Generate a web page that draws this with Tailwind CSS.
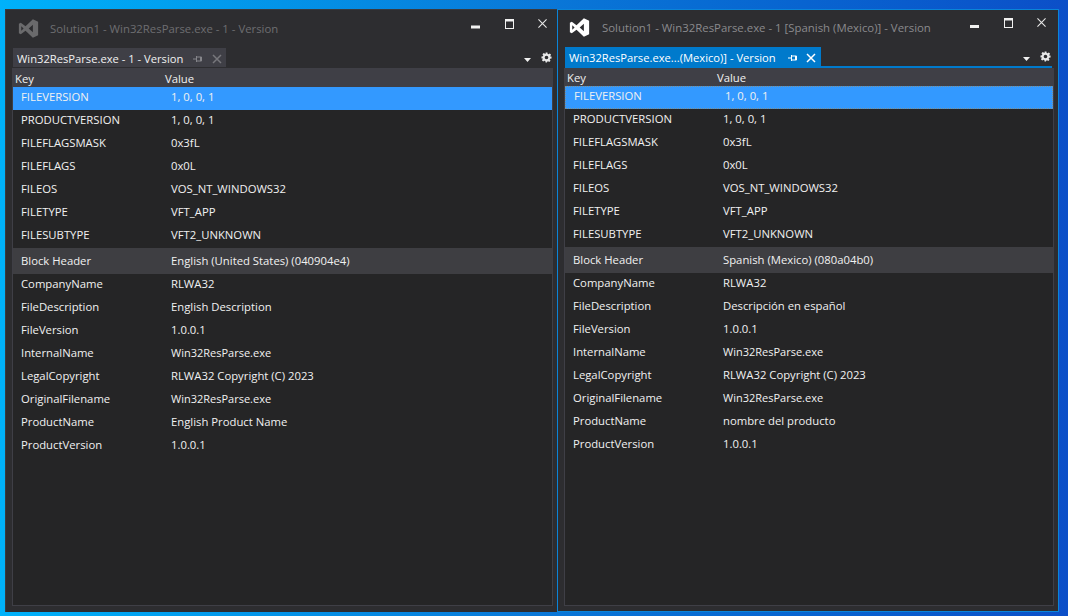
<!doctype html>
<html lang="en"><head><meta charset="utf-8"><script src="https://cdn.jsdelivr.net/npm/@tailwindcss/browser@4"></script></head>
<body class="m-0 overflow-hidden">
<div class="w-[1068px] h-[616px] overflow-hidden flex items-start pl-[5px] pt-[9px] bg-linear-to-r from-[#00b2fa] via-[#0a78d8] to-[#0c4fc8] font-['Open_Sans',sans-serif] text-[11.3px] text-[#f1f1f1]">

<!-- left window -->
<section class="w-[553px] h-[603px] shrink-0 bg-[#2d2d30] border-t border-l border-[#3a3a3e] flex flex-col">
  <header class="h-[38px] shrink-0 flex items-start">
    <svg class="ml-[12px] mt-[8px] w-[21px] h-[21px] text-[#6a6a6c]" viewBox="0 0 24 24" fill="currentColor" fill-rule="evenodd"><path d="M17 1.5 23 4.3V19.7L17 22.5 8.6 14.6 3.2 18.6 1 17.5V6.5L3.2 5.4 8.6 9.4ZM17 7.6 12.2 12 17 16.4ZM3.7 9.3V14.7L6.4 12Z"/></svg>
    <span class="ml-[11px] mt-[10px] text-[11.35px] leading-[18px] text-[#6d6d70] whitespace-nowrap">Solution1 - Win32ResParse.exe - 1 - Version</span>
    <svg class="ml-auto mt-[15px] w-[9px] h-[4px]" viewBox="0 0 9 4"><rect width="9" height="3" y="0.5" fill="#f1f1f1"/></svg>
    <svg class="ml-[25px] mt-[9px] w-[9px] h-[10px]" viewBox="0 0 9 10" fill="none" stroke="#f1f1f1"><rect x="0.5" y="0.5" width="8" height="9"/><path d="M0 1.5H9" stroke-width="2"/></svg>
    <svg class="ml-[24px] mr-[11px] mt-[9px] w-[9px] h-[9px]" viewBox="0 0 10 10" fill="none" stroke="#e8e8e8" stroke-width="1.2"><path d="M0.5 0.5 9.5 9.5M9.5 0.5 0.5 9.5"/></svg>
  </header>
  <div class="h-[20px] shrink-0 ml-[7px] flex items-start">
    <div class="h-[19px] w-[213px] bg-[#3f3f46] flex items-center pl-[4px] pt-[3px] text-[11.2px] whitespace-nowrap">
      <span>Win32ResParse.exe - 1 - Version</span>
      <svg class="absolute left-[193px] top-[54px] w-[9px] h-[10px]" viewBox="0 0 9 10" fill="none" stroke="#85858a"><path d="M0 5H3M3.5 2V8M3.5 3H8.5V7H3.5M7.5 3V7"/></svg>
      <svg class="absolute left-[212px] top-[54px] w-[10px] h-[10px]" viewBox="0 0 10 10" fill="none" stroke="#77777c" stroke-width="1.5"><path d="M1 1 9 9M9 1 1 9"/></svg>
    </div>
    <svg class="ml-auto mt-[10px] w-[7px] h-[4px]" viewBox="0 0 7 4"><path d="M0 0H7L3.5 4Z" fill="#f1f1f1"/></svg>
    <svg class="ml-[10px] mr-[6px] mt-[4px] w-[11px] h-[11px]" viewBox="0 0 24 24" fill="#e8e8e8"><path fill-rule="evenodd" d="M10 1h4l.6 3.2 1.9.8 2.7-1.8 2.8 2.8-1.8 2.7.8 1.9L23 10v4l-3.2.6-.8 1.9 1.8 2.7-2.8 2.8-2.7-1.8-1.9.8L13 23h-3l-.6-3.2-1.9-.8-2.7 1.8-2.8-2.8 1.8-2.7-.8-1.9L1 14v-4l3.2-.6.8-1.9-1.8-2.7 2.8-2.8 2.7 1.8 1.9-.8ZM12 8a4 4 0 1 0 0 8 4 4 0 0 0 0-8Z"/></svg>
  </div>
  <div class="ml-[6px] w-[541px] h-[538px] bg-[#252526] border border-[#3f3f46] flex flex-col leading-[20px]">
    <div class="h-[18px] shrink-0 bg-[#3f3f46] flex items-center pl-[2px] pt-[2px]"><span class="w-[150px]">Key</span><span>Value</span></div>
    <div class="h-[23px] bg-[#3399ff] flex pl-[8px]"><span class="w-[150px]">FILEVERSION</span><span>1, 0, 0, 1</span></div>
    <div class="h-[23px] flex pl-[8px]"><span class="w-[150px]">PRODUCTVERSION</span><span>1, 0, 0, 1</span></div>
    <div class="h-[23px] flex pl-[8px]"><span class="w-[150px]">FILEFLAGSMASK</span><span>0x3fL</span></div>
    <div class="h-[23px] flex pl-[8px]"><span class="w-[150px]">FILEFLAGS</span><span>0x0L</span></div>
    <div class="h-[23px] flex pl-[8px]"><span class="w-[150px]">FILEOS</span><span>VOS_NT_WINDOWS32</span></div>
    <div class="h-[23px] flex pl-[8px]"><span class="w-[150px]">FILETYPE</span><span>VFT_APP</span></div>
    <div class="h-[23px] flex pl-[8px]"><span class="w-[150px]">FILESUBTYPE</span><span>VFT2_UNKNOWN</span></div>
    <div class="h-[26px] bg-[#3e3e42] flex items-center pl-[8px]"><span class="w-[150px]">Block Header</span><span>English (United States) (040904e4)</span></div>
    <div class="h-[23px] flex pl-[8px]"><span class="w-[150px]">CompanyName</span><span>RLWA32</span></div>
    <div class="h-[23px] flex pl-[8px]"><span class="w-[150px]">FileDescription</span><span>English Description</span></div>
    <div class="h-[23px] flex pl-[8px]"><span class="w-[150px]">FileVersion</span><span>1.0.0.1</span></div>
    <div class="h-[23px] flex pl-[8px]"><span class="w-[150px]">InternalName</span><span class="text-[11px]">Win32ResParse.exe</span></div>
    <div class="h-[23px] flex pl-[8px]"><span class="w-[150px]">LegalCopyright</span><span>RLWA32 Copyright (C) 2023</span></div>
    <div class="h-[23px] flex pl-[8px]"><span class="w-[150px]">OriginalFilename</span><span class="text-[11px]">Win32ResParse.exe</span></div>
    <div class="h-[23px] flex pl-[8px]"><span class="w-[150px]">ProductName</span><span>English Product Name</span></div>
    <div class="h-[23px] flex pl-[8px]"><span class="w-[150px]">ProductVersion</span><span>1.0.0.1</span></div>
  </div>
</section>

<!-- right window -->
<section class="relative -ml-px w-[502px] h-[603px] shrink-0 bg-[#2d2d30] border border-[#0a84d8] flex flex-col">
  <header class="h-[37px] shrink-0 flex items-start">
    <svg class="ml-[11px] mt-[7px] w-[21px] h-[21px] text-white" viewBox="0 0 24 24" fill="currentColor" fill-rule="evenodd"><path d="M17 1.5 23 4.3V19.7L17 22.5 8.6 14.6 3.2 18.6 1 17.5V6.5L3.2 5.4 8.6 9.4ZM17 7.6 12.2 12 17 16.4ZM3.7 9.3V14.7L6.4 12Z"/></svg>
    <span class="ml-[12px] mt-[9px] text-[11.4px] leading-[18px] text-[#8a8a8d] whitespace-nowrap">Solution1 - Win32ResParse.exe - 1 [Spanish (Mexico)] - Version</span>
    <svg class="ml-auto mt-[15px] w-[9px] h-[4px]" viewBox="0 0 9 4"><rect width="9" height="3" fill="#f1f1f1"/></svg>
    <svg class="ml-[25px] mt-[8px] w-[9px] h-[10px]" viewBox="0 0 9 10" fill="none" stroke="#f1f1f1"><rect x="0.5" y="0.5" width="8" height="9"/><path d="M0 1.5H9" stroke-width="2"/></svg>
    <svg class="ml-[24px] mr-[12px] mt-[8px] w-[9px] h-[9px]" viewBox="0 0 10 10" fill="none" stroke="#e8e8e8" stroke-width="1.2"><path d="M0.5 0.5 9.5 9.5M9.5 0.5 0.5 9.5"/></svg>
  </header>
  <div class="h-[21px] shrink-0 ml-[7px] mr-[6px] border-b-2 border-[#007acc] flex items-start">
    <div class="h-[19px] w-[256px] bg-[#007acc] flex items-center pl-[4px] pt-[3px] text-[11.2px] text-white whitespace-nowrap">
      <span>Win32ResParse.exe...(Mexico)] - Version</span>
      <svg class="absolute left-[230px] top-[43px] w-[9px] h-[10px]" viewBox="0 0 9 10" fill="none" stroke="#fff"><path d="M0 5H3M3.5 2V8M3.5 3H8.5V7H3.5M7.5 3V7"/></svg>
      <svg class="absolute left-[248px] top-[43px] w-[10px] h-[10px]" viewBox="0 0 10 10" fill="none" stroke="#fff" stroke-width="1.5"><path d="M1 1 9 9M9 1 1 9"/></svg>
    </div>
    <svg class="ml-auto mt-[10px] w-[7px] h-[4px]" viewBox="0 0 7 4"><path d="M0 0H7L3.5 4Z" fill="#f1f1f1"/></svg>
    <svg class="ml-[10px] mr-[1px] mt-[4px] w-[11px] h-[11px]" viewBox="0 0 24 24" fill="#e8e8e8"><path fill-rule="evenodd" d="M10 1h4l.6 3.2 1.9.8 2.7-1.8 2.8 2.8-1.8 2.7.8 1.9L23 10v4l-3.2.6-.8 1.9 1.8 2.7-2.8 2.8-2.7-1.8-1.9.8L13 23h-3l-.6-3.2-1.9-.8-2.7 1.8-2.8-2.8 1.8-2.7-.8-1.9L1 14v-4l3.2-.6.8-1.9-1.8-2.7 2.8-2.8 2.7 1.8 1.9-.8ZM12 8a4 4 0 1 0 0 8 4 4 0 0 0 0-8Z"/></svg>
  </div>
  <div class="ml-[6px] mr-[4px] h-[538px] bg-[#252526] border-x border-b border-[#3f3f46] flex flex-col leading-[20px]">
    <div class="h-[18px] shrink-0 bg-[#3f3f46] flex items-center pl-[2px] pt-[2px]"><span class="w-[150px]">Key</span><span>Value</span></div>
    <div class="h-[23px] bg-[#3399ff] border border-dotted border-[#7f8f90] leading-[18px] flex pl-[8px]"><span class="w-[151px]">FILEVERSION</span><span>1, 0, 0, 1</span></div>
    <div class="h-[23px] flex pl-[8px]"><span class="w-[150px]">PRODUCTVERSION</span><span>1, 0, 0, 1</span></div>
    <div class="h-[23px] flex pl-[8px]"><span class="w-[150px]">FILEFLAGSMASK</span><span>0x3fL</span></div>
    <div class="h-[23px] flex pl-[8px]"><span class="w-[150px]">FILEFLAGS</span><span>0x0L</span></div>
    <div class="h-[23px] flex pl-[8px]"><span class="w-[150px]">FILEOS</span><span>VOS_NT_WINDOWS32</span></div>
    <div class="h-[23px] flex pl-[8px]"><span class="w-[150px]">FILETYPE</span><span>VFT_APP</span></div>
    <div class="h-[23px] flex pl-[8px]"><span class="w-[150px]">FILESUBTYPE</span><span>VFT2_UNKNOWN</span></div>
    <div class="h-[26px] bg-[#3e3e42] flex items-center pl-[8px]"><span class="w-[150px]">Block Header</span><span>Spanish (Mexico) (080a04b0)</span></div>
    <div class="h-[23px] flex pl-[8px]"><span class="w-[150px]">CompanyName</span><span>RLWA32</span></div>
    <div class="h-[23px] flex pl-[8px]"><span class="w-[150px]">FileDescription</span><span>Descripción en español</span></div>
    <div class="h-[23px] flex pl-[8px]"><span class="w-[150px]">FileVersion</span><span>1.0.0.1</span></div>
    <div class="h-[23px] flex pl-[8px]"><span class="w-[150px]">InternalName</span><span class="text-[11px]">Win32ResParse.exe</span></div>
    <div class="h-[23px] flex pl-[8px]"><span class="w-[150px]">LegalCopyright</span><span>RLWA32 Copyright (C) 2023</span></div>
    <div class="h-[23px] flex pl-[8px]"><span class="w-[150px]">OriginalFilename</span><span class="text-[11px]">Win32ResParse.exe</span></div>
    <div class="h-[23px] flex pl-[8px]"><span class="w-[150px]">ProductName</span><span>nombre del producto</span></div>
    <div class="h-[23px] flex pl-[8px]"><span class="w-[150px]">ProductVersion</span><span>1.0.0.1</span></div>
  </div>
</section>
</div>
</body></html>
